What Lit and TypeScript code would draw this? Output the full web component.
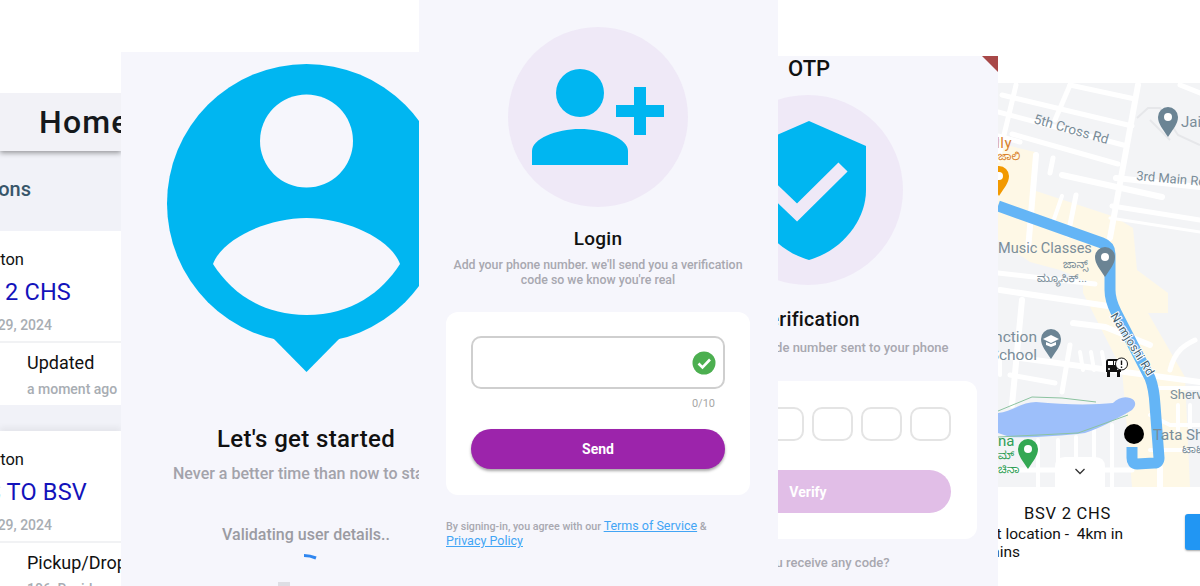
import { LitElement, html, css, svg } from "lit";
import { customElement } from "lit/decorators.js";

const ROADS: [string, number][] = [
  ["M1070 85L1135 99", 5], ["M1002 95L1132 126", 5], ["M998 112L1127 146", 5], ["M1012 134L1118 164", 5],
  ["M998 136L1020 142", 5], ["M1062 175L1162 197", 6], ["M1180 85L1200 93", 5],
  ["M1016 85L998 160", 5], ["M1070 85L1055 120", 5], ["M1138 85L1110 238", 6],
  ["M1036 155L1028 250", 6], ["M1053 158L1050 173", 5], ["M1076 195L1068 235", 5], ["M1062 196L1052 225", 4],
  ["M1116 178L1200 187", 6], ["M1112 206L1200 220", 5], ["M1110 218L1200 232", 3],
  ["M1000 290L1108 306", 6], ["M998 273L1095 284", 5], ["M1073 323L1105 327L1150 345", 6],
  ["M1010 375L1055 383", 5], ["M1022 300L1012 405", 6], ["M998 355L1200 382", 6], ["M1070 345L1062 392", 5],
  ["M1080 352L1083 370M1091 352L1094 370M1102 352L1105 370", 4], ["M1170 370C1175 350 1185 345 1195 340", 5],
  ["M1150 388H1200", 4], ["M1178 405V430M1190 405V430", 4], ["M1000 470H1132", 5],
  ["M1038 440V487M1058 440V487M1076 437V487M1094 430V487M1112 425V487", 4], ["M1160 468V487", 6],
  ["M1150 415L1170 425L1200 425", 4], ["M1150 450H1200", 4], ["M1000 360V375", 4],
];

const pin = (x: number, y: number, fill: string, hole = true) => svg`
  <path d="M${x} ${y + 15}C${x - 5} ${y + 7} ${x - 10} ${y + 2} ${x - 10} ${y - 5}A10 10 0 0 1 ${x + 10} ${y - 5}C${x + 10} ${y + 2} ${x + 5} ${y + 7} ${x} ${y + 15}Z" fill=${fill}/>
  ${hole ? svg`<circle cx=${x} cy=${y - 5} r="4" fill="#fff"/>` : ""}`;

@customElement("app-root")
export class AppRoot extends LitElement {
  static styles = css`
    :host { display: block; position: relative; width: 1200px; height: 586px; overflow: hidden; background: #fff; font-family: Roboto, "Noto Sans", sans-serif; color: #111; }
    .panel { position: absolute; bottom: 0; overflow: hidden; background: #f6f6fc; }
    .p1 { left: 0; width: 121px; top: 93px; background: #f1f2f8; }
    .p2 { left: 121px; width: 298px; top: 52px; display: flex; flex-direction: column; }
    .p3 { left: 419px; width: 359px; box-sizing: border-box; padding-right: 1px; top: 0; display: flex; flex-direction: column; align-items: center; }
    .p4 { left: 778px; width: 220px; top: 56px; }
    .p5 { left: 998px; width: 202px; top: 83px; background: #fff; display: flex; flex-direction: column; }
    .tail { display: flex; justify-content: flex-end; white-space: nowrap; align-items: center; }

    .header { height: 58px; box-sizing: border-box; padding-left: 39px; display: flex; align-items: center; background: #f2f2f7; box-shadow: 0 2px 5px rgba(0,0,0,.38); position: relative; font-size: 32px; font-weight: 500; letter-spacing: 1.2px; color: #15191c; white-space: nowrap; }
    .section { height: 80px; box-sizing: border-box; padding-top: 26px; font-size: 20px; font-weight: 500; color: #38566a; }
    .section .tail { width: 31px; height: 24px; }
    .card { background: #fff; height: 174px; box-sizing: border-box; padding-top: 18px; white-space: nowrap; }
    .card + .card { margin-top: 26px; box-shadow: 0 -4px 6px rgba(0,0,0,.05); }
    .who { width: 24px; height: 20px; font-size: 16.5px; }
    .route { height: 26px; margin-top: 10px; font-size: 23.5px; letter-spacing: .2px; color: #1313bb; }
    .date { width: 52px; height: 18px; margin-top: 11px; font-size: 14px; font-weight: 500; color: #a8adb3; }
    .rule { height: 2px; margin-top: 7px; background: #f1f2f4; }
    .title { margin: 8px 0 0 27px; height: 24px; line-height: 24px; font-size: 18px; }
    .sub { margin: 5px 0 0 27px; height: 18px; line-height: 18px; font-size: 14px; font-weight: 500; color: #a8adb3; }

    .bubble { display: block; margin: 12px 0 0 46px; flex: none; }
    .started { margin-top: 52px; width: 370px; text-align: center; font-size: 24px; line-height: 30px; font-weight: 500; letter-spacing: .35px; }
    .never { margin: 10px 0 0 52px; font-size: 16px; line-height: 20px; font-weight: 500; color: #a3a3ab; white-space: nowrap; }
    .valid { margin-top: 41px; width: 370px; text-align: center; font-size: 16px; line-height: 20px; font-weight: 500; color: #9b9ba2; }
    .spin { display: block; margin: 8px 0 0 181px; flex: none; }
    .tick { width: 12px; height: 4px; margin: 21px 0 0 157px; background: #dedee4; flex: none; }

    .disc { border-radius: 50%; background: #efe9f7; flex: none; }
    .disc3 { width: 180px; height: 180px; margin-top: 27px; }
    .disc svg { display: block; }
    .h-login { margin-top: 20px; font-size: 19px; line-height: 24px; font-weight: 500; letter-spacing: .3px; }
    .lead { margin-top: 7px; text-align: center; font-size: 12.35px; line-height: 15px; font-weight: 500; color: #a8a8b0; white-space: nowrap; }
    .box { background: #fff; border-radius: 12px; box-sizing: border-box; }
    .box3 { width: 304px; height: 183px; margin-top: 24px; padding: 24px 25px 0; }
    .field { height: 53px; box-sizing: border-box; border: 2px solid #cfcfcf; border-radius: 10px; display: flex; align-items: center; justify-content: flex-end; padding-right: 7px; }
    .count { margin-top: 8px; padding-right: 10px; text-align: right; font-size: 11px; line-height: 13px; color: #a6a6a6; }
    .send { margin-top: 19px; height: 40px; border-radius: 20px; background: #9c24ab; box-shadow: 0 2px 3px rgba(0,0,0,.35); color: #fff; font-size: 14px; font-weight: 700; display: flex; align-items: center; justify-content: center; }
    .legal { width: 304px; margin-top: 24px; font-size: 10.7px; line-height: 14px; font-weight: 500; color: #a8a8b0; }
    .legal a { color: #42a5f5; font-size: 12.5px; line-height: 14px; font-weight: 400; text-decoration: underline; }

    .otp { font-size: 22px; line-height: 24px; font-weight: 500; margin: 1px 0 0 10px; color: #111; }
    .phone { width: 380px; margin-left: -160px; display: flex; flex-direction: column; align-items: center; }
    .disc4 { width: 190px; height: 190px; margin-top: 14px; }
    .h-ver { margin-top: 23px; font-size: 19.5px; line-height: 24px; font-weight: 500; letter-spacing: .3px; }
    .lead4 { margin: 7px 0 0 10px; font-size: 13px; line-height: 18px; font-weight: 500; color: #a8a8b0; white-space: nowrap; }
    .box4 { width: 338px; height: 158px; margin-top: 24px; padding: 26px 26px 0; }
    .cells { display: flex; justify-content: flex-end; gap: 8px; }
    .cell { width: 41px; height: 34px; box-sizing: border-box; border: 2px solid #e4e4e4; border-radius: 10px; }
    .verify { margin-top: 29px; height: 43px; border-radius: 22px; background: #e1bee7; color: #fff; font-size: 14px; font-weight: 700; display: flex; align-items: center; justify-content: center; }
    .ask { margin-top: 15px; font-size: 13px; line-height: 18px; font-weight: 500; color: #a8a8b0; white-space: nowrap; }
    .corner { position: absolute; top: 0; right: 0; width: 0; height: 0; border-top: 16px solid #a84848; border-left: 16px solid transparent; }

    .map { display: block; flex: none; }
    .map text { font-family: Roboto, "Noto Sans Kannada", sans-serif; }
    .sheet { position: relative; flex: 1; font-size: 15.5px; white-space: nowrap; }
    .bus { margin: 16px 0 0 26px; font-size: 16.5px; line-height: 22px; letter-spacing: .75px; }
    .where { width: 125px; height: 18px; }
    .mins { width: 22px; height: 18px; }
    .go { position: absolute; left: 187px; top: 27px; width: 30px; height: 36px; border-radius: 3px; background: #2196f3; box-shadow: 0 1px 2px rgba(0,0,0,.35); }
  `;

  private homeCard(route: string, routeWidth: number, row: string, sub: string) {
    return html`<div class="card">
      <div class="tail who">Button</div>
      <div class="tail route" style="width:${routeWidth}px">${route}</div>
      <div class="tail date">Mar 29, 2024</div>
      <div class="rule"></div>
      <div class="title">${row}</div>
      <div class="sub">${sub}</div>
    </div>`;
  }

  private map() {
    return html`<svg class="map" width="202" height="404" viewBox="998 83 202 404">
      <rect x="998" y="83" width="202" height="404" fill="#f3f4f6"/>
      <path fill="#fef8e6" d="M998 143L1035 152L1033 190L1115 217L1133 228L1137 270L1168 293V313H1148L1185 377L1190 487H1132L1122 370L1083 293V280L1060 270L1030 262L998 240Z"/>
      <path fill="none" stroke="#e6e7ea" stroke-width="2" d="M1137 118L1148 108H1160L1178 135L1200 145M1150 120L1170 140"/>
      ${ROADS.map(([d, w]) => svg`<path d=${d} stroke="#fff" stroke-width=${w} stroke-linecap="round" fill="none"/>`)}
      <path fill="#9dbffa" d="M998 413C1010 412 1022 402 1036 402C1065 405 1095 405 1113 403C1118 398 1124 396 1130 398C1136 400 1137 405 1132 410C1115 420 1100 428 1085 433C1060 436 1030 438 1010 437L998 433Z"/>
      <path fill="none" stroke="#8cc3a0" stroke-width="1" d="M998 411L1032 397L1062 398L1096 402M998 437L1078 433L1128 415"/>
      <path fill="none" stroke="#64b5f6" stroke-width="11" stroke-linejoin="round" d="M998 206L1102 243Q1110 246 1110 254V290Q1110 300 1116 312L1150 378Q1154 388 1155 405L1159 458Q1159 463 1154 463L1137 464Q1132 464 1132 458V447"/>
      ${pin(1168, 122, "#6b8494")}
      ${pin(1105, 262, "#6b8494")}
      ${pin(1051, 344, "#6b8494", false)}
      ${pin(1028, 454, "#34a853")}
      ${pin(999, 181, "#f29900")}
      <path d="M1043 339l8-4 8 4-8 4zM1046 342v3l5 2 5-2v-3l-5 2z" fill="#fff"/>
      <g fill="#7a8d99" font-size="13">
        <text transform="translate(1033 123) rotate(16)" font-size="13.5">5th Cross Rd</text>
        <text transform="translate(1136 180) rotate(5)">3rd Main Rd</text>
        <text x="1181" y="127" font-size="15">Jai</text>
        <text x="998" y="253" font-size="14.5">Music Classes</text>
        <text x="1063" y="268" font-size="11">ಜಾನ್ಸ್</text>
        <text x="1037" y="282" font-size="11">ಮ್ಯೂಸಿಕ್...</text>
        <text x="1037" y="342" font-size="15.5" text-anchor="end">Junction</text>
        <text x="1037" y="360" font-size="15.5" text-anchor="end">School</text>
        <text x="1170" y="399">Sherv</text>
        <text x="1153" y="440" font-size="15">Tata Sh</text>
        <text x="1182" y="453" font-size="11">ಟಾಟಾ</text>
      </g>
      <text transform="translate(1110 316) rotate(58)" font-size="12" fill="#44606f" stroke="#fff" stroke-width="2" paint-order="stroke" letter-spacing=".3">Namjoshi Rd</text>
      <text x="1012" y="148" font-size="15" fill="#d9822b" text-anchor="end" letter-spacing=".5">Dolly</text>
      <text x="998" y="160" font-size="11" fill="#d9822b">ಜಾಲಿ</text>
      <text x="998" y="446" font-size="15" fill="#2f9e55">na</text>
      <text x="998" y="459" font-size="11" fill="#2f9e55">ಮ್</text>
      <text x="998" y="473" font-size="11" fill="#2f9e55">ಚಿನಾ</text>
      <g>
        <path d="M1106 362Q1106 359 1109 359H1118Q1121 359 1121 362V372H1106Z" fill="#111"/>
        <rect x="1108" y="361" width="5" height="4" fill="#fff"/><rect x="1114" y="361" width="5" height="4" fill="#fff"/>
        <rect x="1107" y="372" width="3" height="5" fill="#111"/><rect x="1117" y="372" width="3" height="5" fill="#111"/>
        <circle cx="1109" cy="369" r="1" fill="#fff"/><circle cx="1118" cy="369" r="1" fill="#fff"/>
        <circle cx="1121.500" cy="364" r="6" fill="#fff" stroke="#111" stroke-width="1"/>
        <path d="M1121.500 360.500v4.500M1121.500 366.500v1.500" stroke="#111" stroke-width="1.400"/>
      </g>
      <circle cx="1134" cy="434" r="10" fill="#000"/>
      <path d="M1055 487V467Q1055 457 1065 457H1095Q1105 457 1105 467V487Z" fill="#fff"/>
      <path d="M1075.500 469L1080 473.500L1084.500 469" fill="none" stroke="#333" stroke-width="1.300"/>
    </svg>`;
  }

  render() {
    return html`
      <section class="panel p1">
        <div class="header">Home</div>
        <div class="section"><div class="tail">Notifications</div></div>
        ${this.homeCard("BSV\u00a0\u00a02 CHS", 71, "Updated", "a moment ago")}
        ${this.homeCard("CHS TO BSV", 87, "Pickup/Drop", "106, Residency")}
      </section>

      <section class="panel p2">
        <svg class="bubble" width="280" height="308" viewBox="0 0 280 308">
          <circle cx="139.500" cy="139.500" r="139.500" fill="#00b6f1"/>
          <path d="M104 272L139.500 308L175 272Z" fill="#00b6f1"/>
          <circle cx="139.500" cy="77" r="46.500" fill="#f6f6fc"/>
          <path d="M46 200C55 175 100 154 139.500 154C179 154 224 175 233 200C215 228 185 251 139.500 251C94 251 64 228 46 200Z" fill="#f6f6fc"/>
        </svg>
        <div class="started">Let's get started</div>
        <div class="never">Never a better time than now to start</div>
        <div class="valid">Validating user details..</div>
        <svg class="spin" width="16" height="8" viewBox="0 0 16 8"><path d="M2 2.500Q8 2.500 14 5" fill="none" stroke="#2f86f0" stroke-width="3"/></svg>
        <div class="tick"></div>
      </section>

      <section class="panel p3">
        <div class="disc disc3">
          <svg width="180" height="180" viewBox="0 0 180 180">
            <circle cx="72" cy="66" r="24" fill="#00b6f1"/>
            <path d="M24 138V124C24 112 48 102 72 102C96 102 120 112 120 124V138Z" fill="#00b6f1"/>
            <path d="M126 60H138V78H156V90H138V108H126V90H108V78H126Z" fill="#00b6f1"/>
          </svg>
        </div>
        <div class="h-login">Login</div>
        <div class="lead">Add your phone number. we'll send you a verification<br>code so we know you're real</div>
        <div class="box box3">
          <div class="field">
            <svg width="24" height="24" viewBox="0 0 24 24"><circle cx="12" cy="12" r="11.500" fill="#4caf50"/><path d="M6.500 12.500L10.500 16.500L18 8.500" fill="none" stroke="#fff" stroke-width="2.600"/></svg>
          </div>
          <div class="count">0/10</div>
          <div class="send">Send</div>
        </div>
        <div class="legal">By signing-in, you agree with our <a>Terms of Service</a> &amp;<br><a>Privacy Policy</a></div>
      </section>

      <section class="panel p4">
        <div class="otp">OTP</div>
        <div class="phone">
          <div class="disc disc4">
            <svg width="190" height="190" viewBox="0 0 190 190">
              <path d="M96 26L153 51V95C153 125 130 155 96 165C62 155 39 125 39 95V51Z" fill="#00b6f1"/>
              <path d="M130 72L84 117.500L50 85" fill="none" stroke="#efe9f7" stroke-width="13"/>
            </svg>
          </div>
          <div class="h-ver">Verification</div>
          <div class="lead4">Enter the OTP code number sent to your phone</div>
          <div class="box box4">
            <div class="cells"><div class="cell"></div><div class="cell"></div><div class="cell"></div><div class="cell"></div></div>
            <div class="verify">Verify</div>
          </div>
          <div class="ask">Didn't you receive any code?</div>
        </div>
        <div class="corner"></div>
      </section>

      <section class="panel p5">
        ${this.map()}
        <div class="sheet">
          <div class="bus">BSV 2 CHS</div>
          <div class="tail where">Current location -&nbsp; 4km in</div>
          <div class="tail mins">mins</div>
          <div class="go"></div>
        </div>
      </section>
    `;
  }
}
